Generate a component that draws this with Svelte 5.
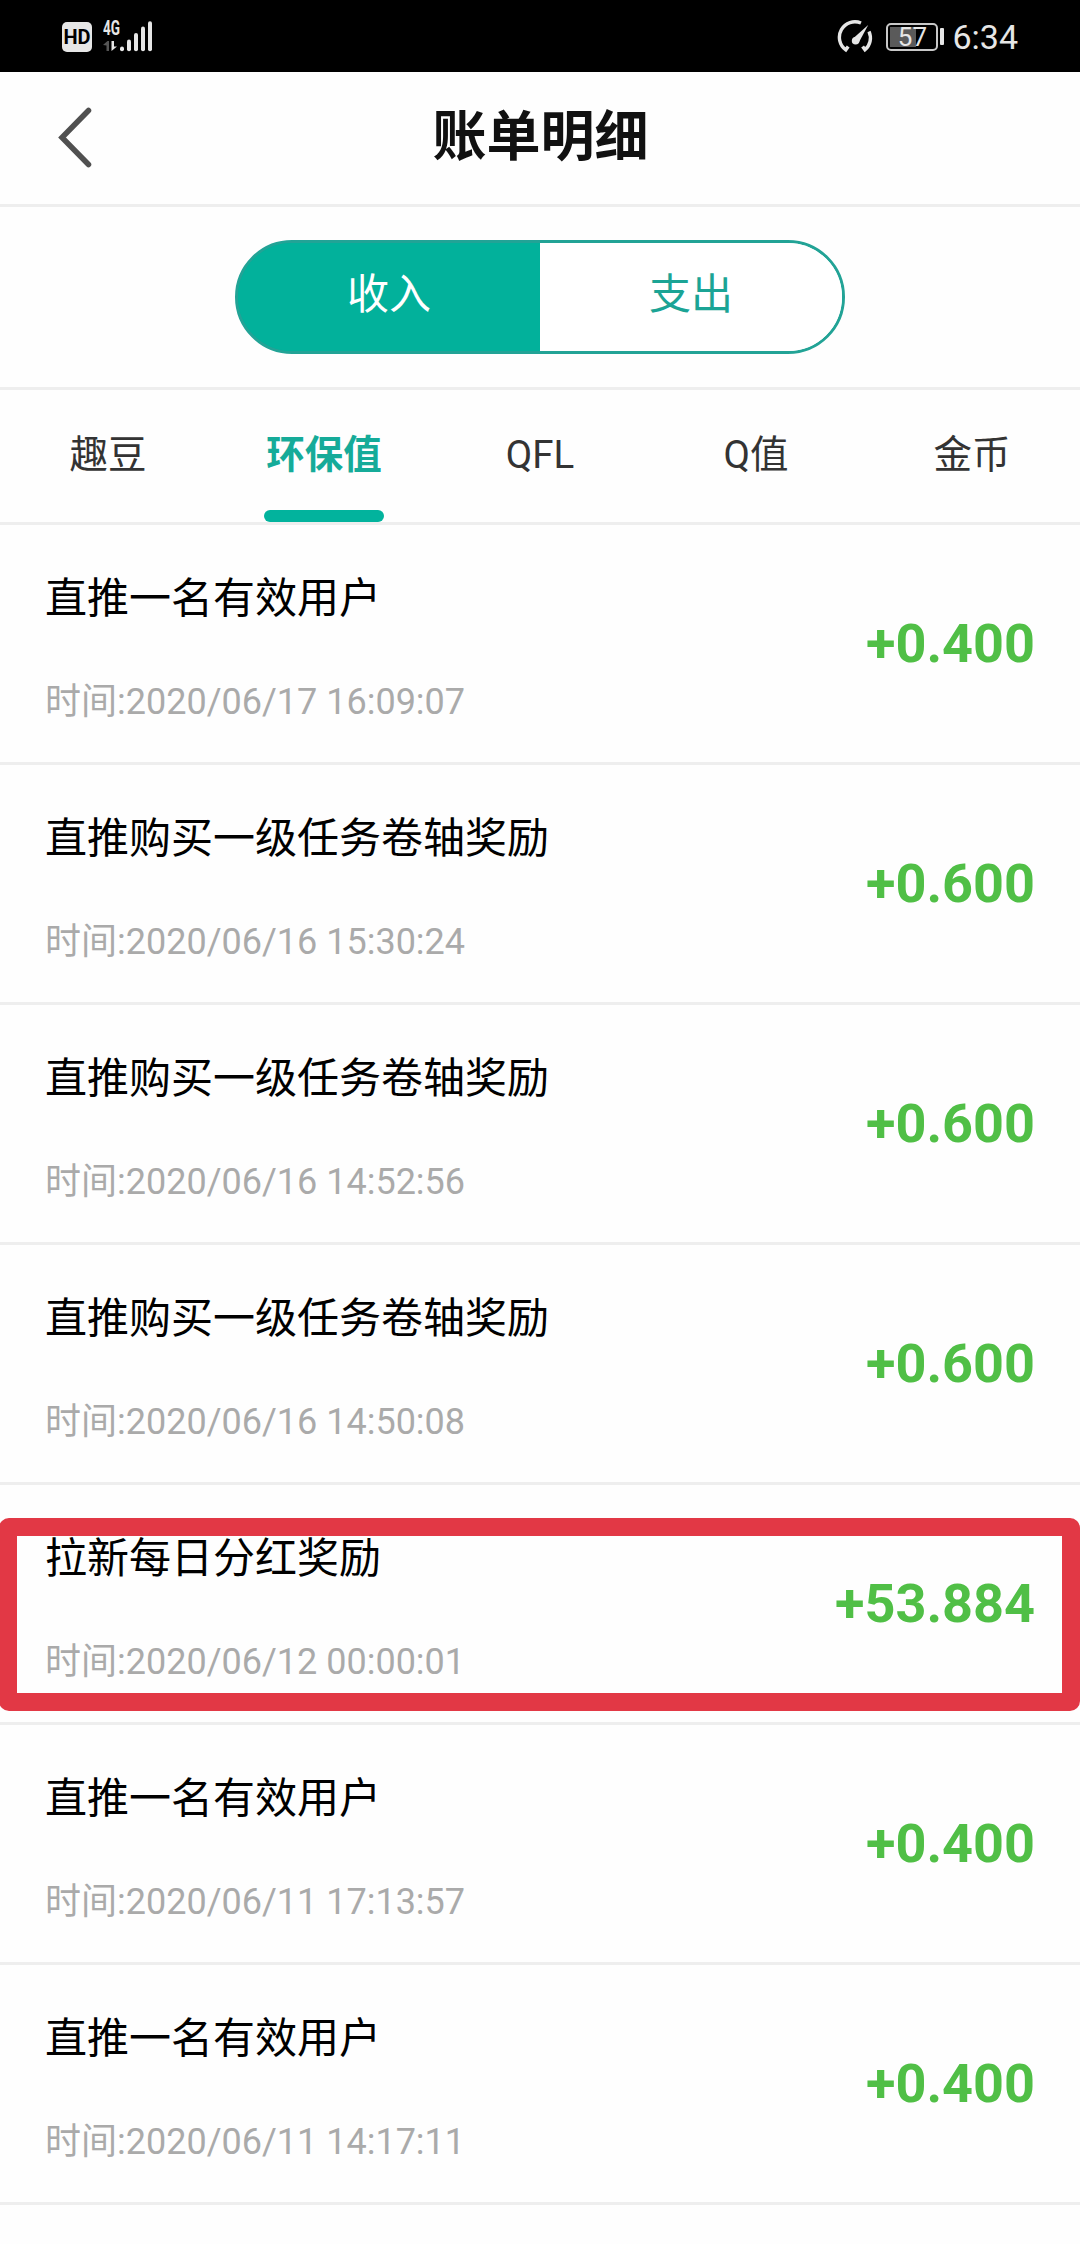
<script lang="ts">
	interface Bill {
		title: string;
		time: string;
		amount: string;
		marked?: boolean;
	}

	const tabs = ['趣豆', '环保值', 'QFL', 'Q值', '金币'];

	const bills: Bill[] = [
		{ title: '直推一名有效用户', time: '2020/06/17 16:09:07', amount: '+0.400' },
		{ title: '直推购买一级任务卷轴奖励', time: '2020/06/16 15:30:24', amount: '+0.600' },
		{ title: '直推购买一级任务卷轴奖励', time: '2020/06/16 14:52:56', amount: '+0.600' },
		{ title: '直推购买一级任务卷轴奖励', time: '2020/06/16 14:50:08', amount: '+0.600' },
		{ title: '拉新每日分红奖励', time: '2020/06/12 00:00:01', amount: '+53.884', marked: true },
		{ title: '直推一名有效用户', time: '2020/06/11 17:13:57', amount: '+0.400' },
		{ title: '直推一名有效用户', time: '2020/06/11 14:17:11', amount: '+0.400' }
	];

	let direction = $state('in');
	let activeTab = $state(1);
</script>

<div class="screen">
	<div class="status-bar">
		<div class="status-left">
			<span class="hd">HD</span>
			<svg class="signal" width="50" height="40" viewBox="0 -4 50 40">
				<text x="0" y="15" textLength="17" lengthAdjust="spacingAndGlyphs">4G</text>
				<path d="M0 25 L4.5 21 H6 V31 H3.5 V25.5 Z" fill="#555" />
				<path d="M8.5 21 V31 L14 26.5 H11 V21 Z" fill="#e6e6e6" />
				<g stroke="#e6e6e6" stroke-width="4" stroke-linecap="round">
					<path d="M19 28.5 V29.2" />
					<path d="M26 21.5 V29.2" />
					<path d="M33 15 V29.2" />
					<path d="M40 8.5 V29.2" />
					<path d="M47 3.2 V29.2" />
				</g>
			</svg>
		</div>
		<div class="status-right">
			<svg class="gauge" width="38" height="34" viewBox="0 0 38 34" fill="none" stroke="#e6e6e6">
				<path d="M24 4 A15.5 15.5 0 0 0 8.8 30.8 L11.2 27.4" stroke-width="3.4" />
				<path d="M32 12.5 A15.5 15.5 0 0 1 28 30.8 L25.6 27.4" stroke-width="3.4" />
				<path d="M16 19.5 L31.2 6 L21.8 23.5 Z" fill="#e6e6e6" stroke="none" />
				<circle cx="18.6" cy="21.8" r="3.8" fill="#e6e6e6" stroke="none" />
			</svg>
			<div class="battery">
				<span class="level"></span>
				<span class="percent">57</span>
			</div>
			<span class="nub"></span>
			<span class="clock">6:34</span>
		</div>
	</div>

	<header>
		<button class="back" aria-label="返回">
			<svg width="36" height="62" viewBox="0 0 36 62">
				<path
					d="M32.5 4.5 L6 31.5 L32.5 58.5"
					fill="none"
					stroke="#505050"
					stroke-width="5.5"
					stroke-linecap="round"
				/>
			</svg>
		</button>
		<h1>账单明细</h1>
	</header>

	<div class="switch-row">
		<div class="switch">
			<button class:active={direction === 'in'} onclick={() => (direction = 'in')}>收入</button>
			<button class:active={direction === 'out'} onclick={() => (direction = 'out')}>支出</button>
		</div>
	</div>

	<nav>
		{#each tabs as tab, i}
			<button class:active={i === activeTab} onclick={() => (activeTab = i)}>{tab}</button>
		{/each}
	</nav>

	<ul>
		{#each bills as bill}
			<li class:marked={bill.marked}>
				<div class="info">
					<p class="title">{bill.title}</p>
					<p class="time">时间:{bill.time}</p>
				</div>
				<span class="amount">{bill.amount}</span>
			</li>
		{/each}
	</ul>
</div>

<style>
	:global(body) {
		background: #fefefe;
	}

	.screen {
		width: 1080px;
		height: 2244px;
		overflow: hidden;
		background: #fefefe;
		font-family: Roboto, 'Noto Sans CJK SC', sans-serif;
	}

	button {
		margin: 0;
		padding: 0;
		border: none;
		background: none;
		font: inherit;
		color: inherit;
	}

	.status-bar {
		display: flex;
		justify-content: space-between;
		align-items: center;
		box-sizing: border-box;
		height: 72px;
		padding: 0 61px 0 62px;
		background: #000;
		color: #e6e6e6;
	}

	.status-left,
	.status-right {
		display: flex;
		align-items: center;
	}

	.hd {
		width: 30px;
		height: 30px;
		margin-top: 2px;
		border-radius: 5px;
		background: #e6e6e6;
		color: #000;
		font-size: 20px;
		font-weight: 700;
		line-height: 31px;
		text-align: center;
	}

	.signal {
		margin-left: 11px;
	}

	.signal text {
		fill: #e6e6e6;
		font-size: 20px;
		font-weight: 700;
	}

	.battery {
		position: relative;
		box-sizing: border-box;
		width: 52px;
		height: 28px;
		margin-left: 11px;
		margin-top: 1px;
		border: 2px solid #c8c8c8;
		border-radius: 5px;
	}

	.level {
		position: absolute;
		left: 2px;
		top: 2px;
		width: 26px;
		height: 20px;
		background: #5a5a5a;
	}

	.percent {
		position: absolute;
		inset: 0;
		font-size: 26px;
		line-height: 25px;
		text-align: center;
	}

	.nub {
		width: 4px;
		height: 17px;
		margin-left: 2px;
		border-radius: 1px;
		background: #e6e6e6;
	}

	.clock {
		margin-left: 8px;
		margin-right: 1px;
		font-size: 34px;
		line-height: 40px;
		margin-top: 2px;
	}

	header {
		position: relative;
		display: flex;
		justify-content: center;
		box-sizing: border-box;
		height: 135px;
		padding-left: 1px;
		border-bottom: 3px solid #eee;
	}

	.back {
		position: absolute;
		left: 56px;
		top: 34px;
		display: flex;
	}

	h1 {
		margin: 0;
		color: #111;
		font-size: 54px;
		font-weight: 700;
		line-height: 132px;
	}

	.switch-row {
		display: flex;
		justify-content: center;
		box-sizing: border-box;
		height: 183px;
		padding-top: 33px;
		border-bottom: 3px solid #eee;
	}

	.switch {
		display: flex;
		box-sizing: border-box;
		width: 610px;
		height: 114px;
		border: 3px solid #22a396;
		border-radius: 57px;
		overflow: hidden;
		background: linear-gradient(to right, #02b19b 50%, #fff 50%) border-box;
	}

	.switch button {
		flex: 1;
		height: 108px;
		padding-bottom: 4px;
		background: #fff;
		color: #1ba495;
		font-size: 42px;
		line-height: 104px;
	}

	.switch button.active {
		background: #02b19b;
		color: #fff;
	}

	nav {
		display: flex;
		box-sizing: border-box;
		height: 135px;
		border-bottom: 3px solid #eee;
	}

	nav button {
		position: relative;
		flex: 1;
		padding-bottom: 2px;
		color: #333;
		font-size: 38.5px;
		line-height: 130px;
	}

	nav button.active {
		color: #15ab99;
		font-weight: 700;
	}

	nav button.active::after {
		content: '';
		position: absolute;
		left: 48px;
		bottom: 0;
		width: 120px;
		height: 12px;
		border-radius: 6px;
		background: #02b39d;
	}

	ul {
		margin: 0;
		padding: 0;
		list-style: none;
	}

	li {
		position: relative;
		display: flex;
		justify-content: space-between;
		align-items: center;
		box-sizing: border-box;
		height: 240px;
		padding: 0 45px;
		border-bottom: 3px solid #eee;
	}

	p {
		margin: 0;
	}

	.info {
		padding-top: 13px;
	}

	.title {
		margin-bottom: 43px;
		color: #000;
		font-size: 42px;
		line-height: 60px;
	}

	.time {
		color: #aaa;
		font-size: 36px;
		line-height: 60px;
	}

	.amount {
		color: #50bf46;
		font-size: 54px;
		font-weight: 700;
		line-height: 64px;
	}

	/* red frame drawn over the highlighted record */
	li.marked::after {
		content: '';
		position: absolute;
		left: -1px;
		right: 0;
		top: 33px;
		height: 193px;
		box-sizing: border-box;
		border: 18px solid #e23845;
		border-radius: 10px;
	}
</style>
